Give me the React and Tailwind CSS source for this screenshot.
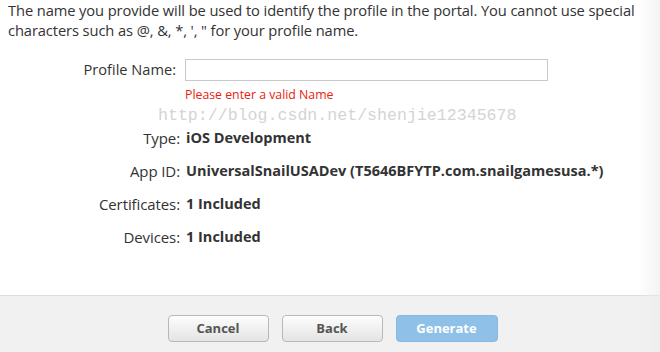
export default function App() {
  const rows = [
    { label: "Type:", value: "iOS Development" },
    { label: "App ID:", value: "UniversalSnailUSADev (T5646BFYTP.com.snailgamesusa.*)" },
    { label: "Certificates:", value: "1 Included" },
    { label: "Devices:", value: "1 Included" },
  ];

  return (
    <div className="relative w-[660px] h-[352px] overflow-hidden bg-white text-[#333] font-['Open_Sans',sans-serif]">
      {/* 描述文字 */}
      <div className="h-[295px]">
        <p className="px-[8px] text-[14.7px] leading-[20px] tracking-[-0.1px]">
          The name you provide will be used to identify the profile in the portal. You cannot use special characters such as @, &amp;, *, ', " for your profile name.
        </p>

        <div className="mt-[19px] flex items-center">
          <div className="w-[178px] text-right text-[14.6px] pr-[2px]">Profile Name:</div>
          <input
            type="text"
            className="ml-[7px] w-[363px] h-[22px] border border-[#c8c8c8] outline-none"
          />
        </div>
        <div className="pl-[185px] mt-[5px] text-[12.3px] leading-[18px] text-[#e8220f]">
          Please enter a valid Name
        </div>
        <div className="pl-[158px] mt-[3px] text-[16.6px] leading-[18px] text-[#d4d4d4] font-['Liberation_Mono',monospace]">
          http://blog.csdn.net/shenjie12345678
        </div>

        <div className="mt-[3px] flex flex-col gap-[13px]">
          {rows.map((row) => (
            <div key={row.label} className="flex items-center h-[20px]">
              <div className="w-[180px] text-right text-[15px] tracking-[-0.1px]">{row.label}</div>
              <div className="ml-[6px] font-bold text-[14.5px]">{row.value}</div>
            </div>
          ))}
        </div>
      </div>

      {/* 底部按鈕列 */}
      <div className="h-[57px] border-t border-[#dedede] bg-[#f1f1f1] flex justify-center pl-[5px] pt-[19px] gap-[13px]">
        <button className="w-[101px] h-[27px] rounded-[4px] border border-[#b8b8b8] bg-gradient-to-b from-[#fdfdfd] to-[#e4e4e4] text-[13px] font-bold text-[#555]">
          Cancel
        </button>
        <button className="w-[101px] h-[27px] rounded-[4px] border border-[#b8b8b8] bg-gradient-to-b from-[#fdfdfd] to-[#e4e4e4] text-[13px] font-bold text-[#555]">
          Back
        </button>
        <button className="w-[102px] h-[27px] rounded-[4px] border border-[#86b8e0] bg-[#8ec0e8] text-[13px] font-bold text-white">
          Generate
        </button>
      </div>

      {/* 右側陰影 */}
      <div className="pointer-events-none absolute top-0 right-0 w-[22px] h-full bg-gradient-to-r from-transparent to-[#ececec]/60" />
    </div>
  );
}
